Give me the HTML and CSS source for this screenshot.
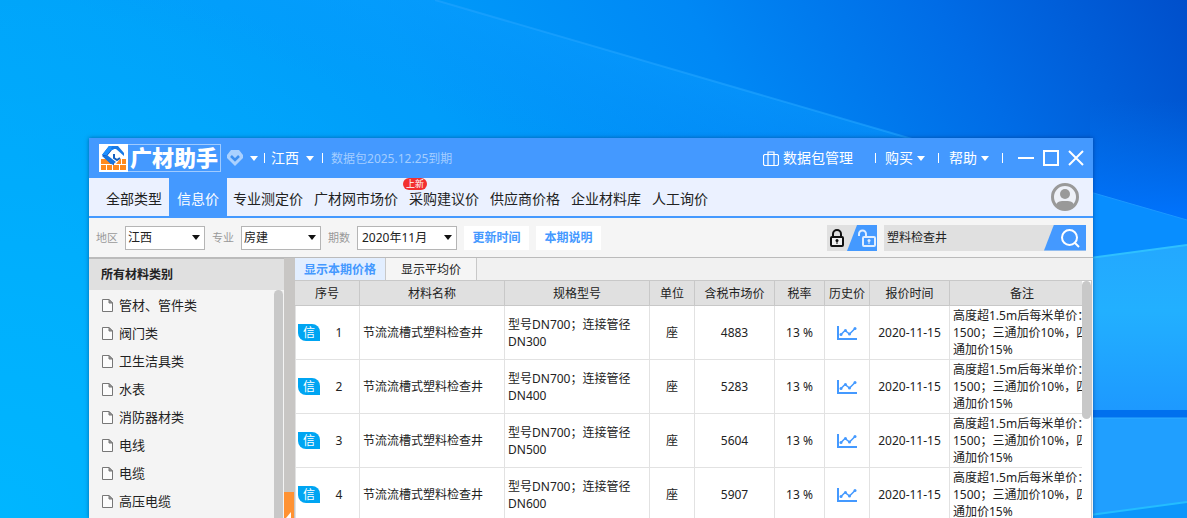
FILE: index.html
```html
<!DOCTYPE html>
<html lang="zh-CN">
<head>
<meta charset="utf-8">
<title>广材助手</title>
<link rel="stylesheet" href="styles.css">
</head>
<body>
<svg class="wallpaper" viewBox="0 0 1187 518" preserveAspectRatio="none" aria-hidden="true">
  <defs>
    <linearGradient id="sky" x1="0" y1="0.25" x2="1" y2="0">
      <stop offset="0" stop-color="#00a6fa"/>
      <stop offset="0.35" stop-color="#009dfa"/>
      <stop offset="0.6" stop-color="#0088f5"/>
      <stop offset="0.8" stop-color="#006ce6"/>
      <stop offset="1" stop-color="#004fcb"/>
    </linearGradient>
    <radialGradient id="low" gradientUnits="userSpaceOnUse" cx="0" cy="518" r="560">
      <stop offset="0" stop-color="#00b6ff"/>
      <stop offset="0.4" stop-color="#00b4ff" stop-opacity="0.7"/>
      <stop offset="1" stop-color="#00b0ff" stop-opacity="0"/>
    </radialGradient>
    <linearGradient id="beam" gradientUnits="userSpaceOnUse" x1="670" y1="68" x2="640" y2="171">
      <stop offset="0" stop-color="#0a9cff" stop-opacity="0.5"/>
      <stop offset="1" stop-color="#0a92ff" stop-opacity="0"/>
    </linearGradient>
    <linearGradient id="edge" x1="0" y1="0" x2="0" y2="1">
      <stop offset="0" stop-color="#006fea" stop-opacity="0"/>
      <stop offset="1" stop-color="#0074ff"/>
    </linearGradient>
    <linearGradient id="pane" x1="0" y1="0" x2="0" y2="1">
      <stop offset="0" stop-color="#23a8ff"/>
      <stop offset="0.4" stop-color="#22b0ff"/>
      <stop offset="1" stop-color="#1d99ff"/>
    </linearGradient>
  </defs>
  <rect width="1187" height="518" fill="url(#sky)"/>
  <rect width="1187" height="518" fill="url(#low)"/>
  <path d="M435 0L912 139H0V0z" fill="url(#beam)"/>
  <path d="M435 0L912 139" stroke="#22a4ff" stroke-width="2" opacity="0.6"/>
  <path d="M1090 100H1187V221L1090 192z" fill="url(#edge)"/>
  <path d="M1090 192L1187 220V246L1090 258z" fill="#088eff"/>
  <path d="M1090 192L1187 220" stroke="#1c98ff"/>
  <path d="M1090 258L1187 245V410H1090z" fill="url(#pane)"/>
  <path d="M1090 258L1187 245" stroke="#2fc0ff" stroke-width="2"/>
  <rect x="1090" y="410" width="97" height="8" fill="#0070ee"/>
  <path d="M1090 418H1187V502L1090 515z" fill="#209fff"/>
  <path d="M1090 418H1187" stroke="#30adff"/>
  <path d="M1090 515L1187 502V518H1090z" fill="#0c96fb"/>
  <path d="M1090 515L1187 502" stroke="#24bdff" stroke-width="2"/>
</svg>

<svg class="sprite" aria-hidden="true">
  <symbol id="i-doc" viewBox="0 0 11 13"><path d="M.5.5H7L10.500 4V12.500H.5z" fill="#fcfcfc" stroke="#777"/><path d="M7 .5V4H10.500z" fill="#999" stroke="#777"/></symbol>
  <symbol id="i-chart" viewBox="0 0 20 14"><path d="M1 0V13H20" fill="none" stroke="#4499ff" stroke-width="2"/><path d="M4 8.500L8 4.500L12.500 8L18 2.500" fill="none" stroke="#4499ff" stroke-width="1.500"/><g fill="#4499ff"><circle cx="4" cy="8.500" r="1.500"/><circle cx="8.500" cy="4.500" r="1.500"/><circle cx="12.500" cy="8" r="1.500"/><circle cx="18" cy="2.500" r="1.500"/></g></symbol>
</svg>

<main class="window">
  <header class="titlebar">
    <div class="logo">
      <svg class="logo-mark" viewBox="0 0 29 28" aria-hidden="true">
        <rect width="29" height="28" fill="#fff"/>
        <path d="M2 15H7L12 19L17 20L21 15H27V26H2z" fill="#ff8a1f"/>
        <path d="M2 20.500H27M7.500 21V26M13.500 21V26M20.500 21V26M22.500 15V20" stroke="#fff"/>
        <path d="M3 11L10 2H13L13 6L8 12L15 18V21L12 20z" fill="#0d4fb5"/>
        <path d="M3 11L10 2H18L14 6H12L8 11z" fill="#1e90ff"/>
        <path d="M13 2H19L25 9V12L17 5H12z" fill="#1a7ae6"/>
        <path d="M8 11L17 18L14 20H12L3 12z" fill="#1775e0"/>
        <path d="M15 10V14L18 16L21 14" fill="none" stroke="#1660c0" stroke-width="2"/>
      </svg>
      <span class="logo-text">广材助手</span>
    </div>
    <button class="icon-menu" aria-label="会员">
      <svg width="16" height="16" viewBox="0 0 16 16"><path d="M4 0H12L16 5V8L8 16L0 8V5z" fill="#aad1ff"/><path d="M4 6L8 10L12 6" fill="none" stroke="#3f90f0" stroke-width="2.500"/></svg>
      <span class="caret"></span>
    </button>
    <span class="sep"></span>
    <button class="title-menu">江西<span class="caret gap-wide"></span></button>
    <span class="sep"></span>
    <span class="expiry">数据包2025.12.25到期</span>
    <div class="title-right">
      <button class="title-menu"><svg class="bag" width="16" height="15" viewBox="0 0 16 15"><path d="M1.500 3.500H14.500L15.500 4.500V13.500L14.500 14.500H1.500L.5 13.500V4.500zM5 14V1H11V14M5 3.500V1M8 1" fill="none" stroke="#fff" stroke-width="1.200"/></svg>数据包管理</button>
      <span class="sep sep-first"></span>
      <button class="title-menu">购买<span class="caret"></span></button>
      <span class="sep"></span>
      <button class="title-menu">帮助<span class="caret"></span></button>
      <span class="sep"></span>
      <div class="window-controls">
        <button aria-label="最小化"><svg width="16" height="16"><path d="M0 8H16" stroke="#fff" stroke-width="2"/></svg></button>
        <button aria-label="最大化"><svg width="16" height="16"><rect x="1" y="1" width="14" height="14" fill="none" stroke="#fff" stroke-width="2"/></svg></button>
        <button aria-label="关闭"><svg width="16" height="16"><path d="M1 1L15 15M15 1L1 15" stroke="#fff" stroke-width="2"/></svg></button>
      </div>
    </div>
  </header>

  <nav class="nav">
    <a class="nav-link nav-first" href="#">全部类型</a>
    <a class="nav-link active" href="#">信息价</a>
    <a class="nav-link" href="#">专业测定价</a>
    <a class="nav-link" href="#">广材网市场价</a>
    <a class="nav-link" href="#">采购建议价<span class="badge">上新</span></a>
    <a class="nav-link" href="#">供应商价格</a>
    <a class="nav-link" href="#">企业材料库</a>
    <a class="nav-link" href="#">人工询价</a>
    <button class="avatar" aria-label="用户">
      <svg width="28" height="28" viewBox="0 0 28 28"><circle cx="14" cy="14" r="12.500" fill="#eef1f8" stroke="#999" stroke-width="3"/><circle cx="14" cy="11" r="5" fill="#999"/><path d="M5 22C6 18 10 18 14 18S22 18 23 22L19 26H9z" fill="#999"/></svg>
    </button>
  </nav>

  <form class="filters">
    <label for="region">地区</label>
    <span class="select"><select id="region"><option>江西</option></select></span>
    <label for="major">专业</label>
    <span class="select"><select id="major"><option>房建</option></select></span>
    <label for="period">期数</label>
    <span class="select select-wide"><select id="period"><option>2020年11月</option></select></span>
    <button type="button" class="link-btn">更新时间</button>
    <button type="button" class="link-btn">本期说明</button>
    <button type="button" class="lock" aria-label="锁定">
      <svg width="50" height="26" viewBox="0 0 50 26">
        <rect width="50" height="26" fill="#e0e0e0"/>
        <path d="M30 0H50V26H20z" fill="#4499ff"/>
        <path d="M6 12V9A4 4 0 0 1 14 9V12" fill="none" stroke="#111" stroke-width="2"/>
        <rect x="4" y="12" width="12" height="9" rx="1" fill="#f2f2f2" stroke="#111" stroke-width="2"/>
        <circle cx="10" cy="15.500" r="1.500" fill="#111"/><path d="M10 15V19" stroke="#111"/>
        <path d="M32 11V9A3.500 3.500 0 0 1 39 9V12" fill="none" stroke="#e0eeff" stroke-width="2"/>
        <rect x="36" y="12" width="12" height="9" rx="1" fill="none" stroke="#e0eeff" stroke-width="2"/>
        <circle cx="42" cy="15.500" r="1.500" fill="#e0eeff"/><path d="M42 15V19" stroke="#e0eeff"/>
      </svg>
    </button>
    <div class="search">
      <input type="text" aria-label="搜索材料" value="塑料检查井">
      <button type="button" class="search-btn" aria-label="搜索"><svg width="20" height="20" viewBox="0 0 20 20"><circle cx="9.500" cy="9.500" r="7.500" fill="none" stroke="#fff" stroke-width="2"/><path d="M15 15L19 19" stroke="#fff" stroke-width="2"/></svg></button>
    </div>
  </form>

  <div class="body">
    <aside class="sidebar">
      <h2>所有材料类别</h2>
      <div class="tree">
        <ul>
          <li><a href="#"><svg class="doc"><use href="#i-doc"/></svg>管材、管件类</a></li>
          <li><a href="#"><svg class="doc"><use href="#i-doc"/></svg>阀门类</a></li>
          <li><a href="#"><svg class="doc"><use href="#i-doc"/></svg>卫生洁具类</a></li>
          <li><a href="#"><svg class="doc"><use href="#i-doc"/></svg>水表</a></li>
          <li><a href="#"><svg class="doc"><use href="#i-doc"/></svg>消防器材类</a></li>
          <li><a href="#"><svg class="doc"><use href="#i-doc"/></svg>电线</a></li>
          <li><a href="#"><svg class="doc"><use href="#i-doc"/></svg>电缆</a></li>
          <li><a href="#"><svg class="doc"><use href="#i-doc"/></svg>高压电缆</a></li>
        </ul>
        <div class="tree-bar"></div>
      </div>
    </aside>
    <div class="divider">
      <button class="collapse" aria-label="收起"><svg width="10" height="40" viewBox="0 0 10 40"><path d="M7 20V32L2 26z" fill="#fff"/></svg></button>
    </div>
    <section class="content">
      <div class="tabs">
        <button class="tab current">显示本期价格</button>
        <button class="tab">显示平均价</button>
      </div>
      <div class="grid">
        <div class="grid-view">
          <table>
            <colgroup><col class="c-no"><col class="c-name"><col class="c-name"><col class="c-unit"><col class="c-price"><col class="c-tax"><col class="c-unit"><col class="c-price"><col class="c-name"></colgroup>
            <thead><tr><th>序号</th><th>材料名称</th><th>规格型号</th><th>单位</th><th>含税市场价</th><th>税率</th><th>历史价</th><th>报价时间</th><th>备注</th></tr></thead>
            <tbody>
              <tr><td><div class="no"><span class="tag">信</span><span class="num">1</span></div></td><td class="left">节流流槽式塑料检查井</td><td class="left">型号DN700；连接管径DN300</td><td>座</td><td>4883</td><td>13 %</td><td><svg class="chart"><use href="#i-chart"/></svg></td><td>2020-11-15</td><td class="left">高度超1.5m后每米单价：1500；三通加价10%，四通加价15%</td></tr>
              <tr><td><div class="no"><span class="tag">信</span><span class="num">2</span></div></td><td class="left">节流流槽式塑料检查井</td><td class="left">型号DN700；连接管径DN400</td><td>座</td><td>5283</td><td>13 %</td><td><svg class="chart"><use href="#i-chart"/></svg></td><td>2020-11-15</td><td class="left">高度超1.5m后每米单价：1500；三通加价10%，四通加价15%</td></tr>
              <tr><td><div class="no"><span class="tag">信</span><span class="num">3</span></div></td><td class="left">节流流槽式塑料检查井</td><td class="left">型号DN700；连接管径DN500</td><td>座</td><td>5604</td><td>13 %</td><td><svg class="chart"><use href="#i-chart"/></svg></td><td>2020-11-15</td><td class="left">高度超1.5m后每米单价：1500；三通加价10%，四通加价15%</td></tr>
              <tr><td><div class="no"><span class="tag">信</span><span class="num">4</span></div></td><td class="left">节流流槽式塑料检查井</td><td class="left">型号DN700；连接管径DN600</td><td>座</td><td>5907</td><td>13 %</td><td><svg class="chart"><use href="#i-chart"/></svg></td><td>2020-11-15</td><td class="left">高度超1.5m后每米单价：1500；三通加价10%，四通加价15%</td></tr>
            </tbody>
          </table>
        </div>
        <div class="grid-bar"><div class="thumb"></div></div>
      </div>
    </section>
  </div>
</main>
</body>
</html>
```

FILE: styles.css
```css
* { box-sizing: border-box; }

body {
  margin: 0;
  height: 100vh;
  overflow: hidden;
  display: flex;
  padding: 138px 94px 0 89px;
  background: #009dfa;
  color: #222;
  font-family: "Noto Sans", "Noto Sans CJK SC", sans-serif;
  font-size: 12px;
  line-height: 17px;
}

button, input, select {
  font: inherit;
  color: inherit;
  margin: 0;
  padding: 0;
  border: 0;
  background: none;
}

a { color: inherit; text-decoration: none; }
svg { display: block; flex: none; }

.wallpaper {
  position: absolute;
  inset: 0;
  width: 100%;
  height: 100%;
  z-index: -1;
}

.sprite { position: absolute; width: 0; height: 0; }

.window {
  flex: 1;
  min-width: 0;
  display: flex;
  flex-direction: column;
  background: #f5f5f5;
  box-shadow: 0 0 4px rgba(0, 30, 90, 0.5);
}

/* title bar */
.titlebar {
  flex: none;
  height: 40px;
  display: flex;
  align-items: center;
  padding: 0 9px 0 10px;
  background: #4499ff;
  color: #fff;
}

.logo {
  display: flex;
  align-items: center;
  height: 28px;
  padding-right: 2px;
  border: 1px solid #a0cbff;
  border-left: 0;
  margin-right: 6px;
}

.logo-mark { width: 29px; height: 28px; }

.logo-text {
  padding-left: 2px;
  font-family: "Noto Sans CJK SC", sans-serif;
  font-size: 22px;
  font-weight: 900;
  line-height: 22px;
  height: 26px;
}

.icon-menu, .title-menu {
  display: flex;
  align-items: center;
  font-size: 14px;
  line-height: 20px;
  white-space: nowrap;
}

.icon-menu { gap: 7px; }

.caret {
  margin-left: 4px;
  border: 4px solid transparent;
  border-top: 5px solid #fff;
  border-bottom: 0;
}

.icon-menu .caret { margin-left: 0; }
.caret.gap-wide { margin-left: 7px; }

.sep {
  width: 1px;
  height: 10px;
  margin: 0 8px 0 6px;
  background: #fff;
}

.icon-menu + .sep { margin-right: 6px; }
.gap-wide { margin-right: 2px; }

.expiry { color: #a3cdff; white-space: nowrap; }

.title-right { display: flex; align-items: center; margin-left: auto; }
.title-right .sep { margin: 0 10px 0 13px; }
.title-right .sep-first { margin-left: 22px; margin-right: 9px; }
.bag { margin-right: 4px; }

.window-controls { display: flex; gap: 9px; padding-left: 5px; }

/* navigation */
.nav {
  flex: none;
  display: flex;
  height: 40px;
  padding: 0 14px 0 10px;
  border-bottom: 2px solid #4499ff;
  background: #ebf1ff;
}

.nav-link {
  position: relative;
  padding: 0 6px;
  font-size: 14px;
  line-height: 42px;
  white-space: nowrap;
}

.nav-link + .nav-link:not(.active) { padding-right: 5px; }
.nav-first { padding: 0 7px; }
.nav-link.active { padding: 0 8px; background: #4499ff; color: #fff; }

.badge {
  position: absolute;
  left: 0;
  top: 0;
  width: 24px;
  height: 12px;
  border-radius: 6px;
  background: #f23030;
  color: #fff;
  font-size: 9px;
  line-height: 12px;
  text-align: center;
}

.avatar { margin-left: auto; align-self: center; }

/* filter bar */
.filters {
  flex: none;
  display: flex;
  align-items: center;
  height: 40px;
  padding: 0 7px;
  border-bottom: 1px solid #bbb;
  background: #f5f5f5;
}

.filters label { margin-right: 7px; font-size: 11px; color: #999; white-space: nowrap; }

.select { position: relative; width: 80px; margin-right: 7px; }
.select-wide { width: 100px; }

.select select {
  display: block;
  width: 100%;
  height: 24px;
  padding-left: 2px;
  border: 1px solid #b5b5b5;
  background: #fff;
  appearance: none;
}

.select-wide select { padding-left: 4px; }

.select::after {
  content: "";
  position: absolute;
  right: 5px;
  top: 9px;
  border: 4px solid transparent;
  border-top: 5px solid #111;
  border-bottom: 0;
}

.link-btn {
  width: 65px;
  height: 24px;
  margin-right: 7px;
  background: #fff;
  color: #4499ff;
  font-weight: 700;
  white-space: nowrap;
}

.lock { margin-left: auto; margin-right: 7px; }

.search { display: flex; width: 202px; height: 26px; background: #e0e0e0; }
.search input { flex: 1; min-width: 0; padding-left: 3px; outline: 0; }

.search-btn {
  width: 42px;
  padding-left: 16px;
  background: #4499ff;
  clip-path: polygon(10px 0, 100% 0, 100% 100%, 0 100%);
}

/* body */
.body { flex: 1; min-height: 0; display: flex; }

.sidebar {
  flex: none;
  width: 195px;
  display: flex;
  flex-direction: column;
  border-top: 1px solid #bbb;
  background: #f4f4f4;
}

.sidebar h2 {
  flex: none;
  margin: 0;
  padding-left: 12px;
  background: #e0e0e0;
  font-size: 12px;
  font-weight: 700;
  line-height: 31px;
}

.tree { flex: 1; min-height: 0; display: flex; overflow: hidden; }

.tree ul { flex: 1; margin: 0; padding: 1px 0 0; list-style: none; }

.tree a {
  display: flex;
  align-items: center;
  gap: 6px;
  height: 28px;
  padding-left: 13px;
  font-size: 13px;
}

.doc { width: 11px; height: 13px; }

.tree-bar { width: 9px; margin-right: 1px; border-radius: 5px 5px 0 0; background: #c8c8c8; }

.divider { flex: none; width: 11px; background: #c8c6c4; overflow: hidden; }

.collapse {
  display: block;
  width: 10px;
  margin-top: 234px;
  background: #ff9233;
}

.content { flex: 1; min-width: 0; display: flex; flex-direction: column; margin-right: 1px; }

.tabs {
  flex: none;
  display: flex;
  height: 23px;
  border-bottom: 1px solid #c8c8c8;
  background: #f1f1f1;
}

.tab { width: 91px; border-right: 1px solid #c8c8c8; background: #f5f5f5; white-space: nowrap; }
.tab.current { background: #e2eeff; color: #4499ff; font-weight: 700; }

.grid { flex: 1; min-height: 0; display: flex; background: #fff; border-right: 1px solid #c8c8c8; }

.grid-view { flex: 1; min-width: 0; overflow: hidden; }

table { width: 100%; min-width: 800px; table-layout: fixed; border-spacing: 0; }

.c-no { width: 65px; }
.c-name { width: 145px; }
.c-unit { width: 45px; }
.c-price { width: 80px; }
.c-tax { width: 50px; }

th {
  height: 25px;
  padding: 0;
  border-right: 1px solid #c8c8c8;
  border-bottom: 1px solid #c8c8c8;
  background: #e0e0e0;
  font-weight: 400;
  white-space: nowrap;
}

td {
  height: 54px;
  padding: 0;
  border-right: 1px solid #e2e2e2;
  border-bottom: 1px solid #e2e2e2;
  text-align: center;
}

td.left { padding: 0 3px; text-align: left; }
td:first-child { border-left: 1px solid #e2e2e2; }

.no { display: flex; align-items: center; padding-left: 2px; }

.tag {
  width: 22px;
  height: 17px;
  border-radius: 0 8px 0 8px;
  background: #00a5f2;
  color: #fff;
}

.num { width: 38px; }

.chart { width: 20px; height: 14px; margin: 0 auto; }

.grid-bar { flex: none; width: 9px; background: #fff; }
.thumb { height: 138px; border-radius: 5px; background: #c8c8c8; }
```
